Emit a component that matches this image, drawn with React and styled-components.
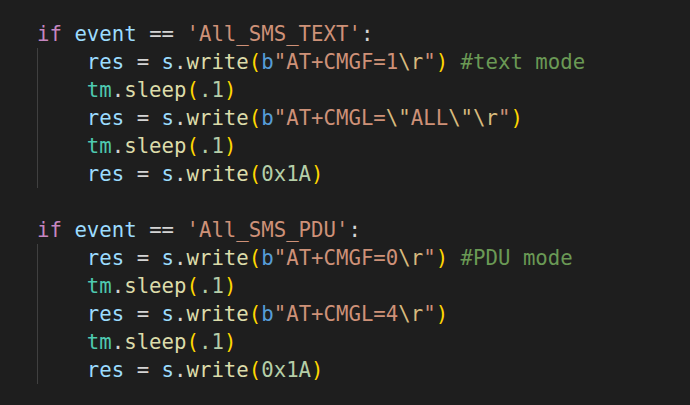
import styled, { createGlobalStyle } from 'styled-components'

const GlobalStyle = createGlobalStyle`
    html, body {
        margin: 0;
        padding: 0;
        background: #1e1e1e;
    }
`

const colors = {
    keyword: '#c586c0',
    variable: '#9cdcfe',
    plain: '#d4d4d4',
    string: '#ce9178',
    escape: '#d7ba7d',
    func: '#dcdcaa',
    bracket: '#ffd700',
    storage: '#569cd6',
    module: '#4ec9b0',
    number: '#b5cea8',
    comment: '#6a9955',
}

const Editor = styled.div`
    width: 690px;
    height: 405px;
    box-sizing: border-box;
    padding: 20px 0 0 37px;
    background: #1e1e1e;
    font-family: "DejaVu Sans Mono", "Liberation Mono", monospace;
    font-size: 20.7px;
    line-height: 28px;
    white-space: pre;
    overflow: hidden;
`

const Line = styled.div`
    height: 28px;
`

const IndentBlock = styled.div`
    border-left: 1px solid #404040;
    padding-left: calc(4ch - 1px);
`

const Token = styled.span`
    color: ${({ $kind }) => colors[$kind] || colors.plain};
`

const blocks = [
    {
        event: 'All_SMS_TEXT',
        body: [
            [['res', 'variable'], [' = ', 'plain'], ['s', 'variable'], ['.', 'plain'], ['write', 'func'], ['(', 'bracket'], ['b', 'storage'], ['"AT+CMGF=1', 'string'], ['\\r', 'escape'], ['"', 'string'], [')', 'bracket'], [' ', 'plain'], ['#text mode', 'comment']],
            [['tm', 'module'], ['.', 'plain'], ['sleep', 'func'], ['(', 'bracket'], ['.1', 'number'], [')', 'bracket']],
            [['res', 'variable'], [' = ', 'plain'], ['s', 'variable'], ['.', 'plain'], ['write', 'func'], ['(', 'bracket'], ['b', 'storage'], ['"AT+CMGL=', 'string'], ['\\"', 'escape'], ['ALL', 'string'], ['\\"', 'escape'], ['\\r', 'escape'], ['"', 'string'], [')', 'bracket']],
            [['tm', 'module'], ['.', 'plain'], ['sleep', 'func'], ['(', 'bracket'], ['.1', 'number'], [')', 'bracket']],
            [['res', 'variable'], [' = ', 'plain'], ['s', 'variable'], ['.', 'plain'], ['write', 'func'], ['(', 'bracket'], ['0x1A', 'number'], [')', 'bracket']],
        ],
    },
    {
        event: 'All_SMS_PDU',
        body: [
            [['res', 'variable'], [' = ', 'plain'], ['s', 'variable'], ['.', 'plain'], ['write', 'func'], ['(', 'bracket'], ['b', 'storage'], ['"AT+CMGF=0', 'string'], ['\\r', 'escape'], ['"', 'string'], [')', 'bracket'], [' ', 'plain'], ['#PDU mode', 'comment']],
            [['tm', 'module'], ['.', 'plain'], ['sleep', 'func'], ['(', 'bracket'], ['.1', 'number'], [')', 'bracket']],
            [['res', 'variable'], [' = ', 'plain'], ['s', 'variable'], ['.', 'plain'], ['write', 'func'], ['(', 'bracket'], ['b', 'storage'], ['"AT+CMGL=4', 'string'], ['\\r', 'escape'], ['"', 'string'], [')', 'bracket']],
            [['tm', 'module'], ['.', 'plain'], ['sleep', 'func'], ['(', 'bracket'], ['.1', 'number'], [')', 'bracket']],
            [['res', 'variable'], [' = ', 'plain'], ['s', 'variable'], ['.', 'plain'], ['write', 'func'], ['(', 'bracket'], ['0x1A', 'number'], [')', 'bracket']],
        ],
    },
]

function CodeLine({ tokens }) {
    return (
        <Line>
            {tokens.map(([text, kind], i) => (
                <Token key={i} $kind={kind}>{text}</Token>
            ))}
        </Line>
    )
}

export default function App() {
    return (
        <>
            <GlobalStyle />
            <Editor>
                {blocks.map((block, b) => (
                    <div key={block.event}>
                        {b > 0 && <Line />}
                        <CodeLine
                            tokens={[
                                ['if', 'keyword'],
                                [' ', 'plain'],
                                ['event', 'variable'],
                                [' == ', 'plain'],
                                [`'${block.event}'`, 'string'],
                                [':', 'plain'],
                            ]}
                        />
                        <IndentBlock>
                            {block.body.map((tokens, i) => (
                                <CodeLine key={i} tokens={tokens} />
                            ))}
                        </IndentBlock>
                    </div>
                ))}
            </Editor>
        </>
    )
}
